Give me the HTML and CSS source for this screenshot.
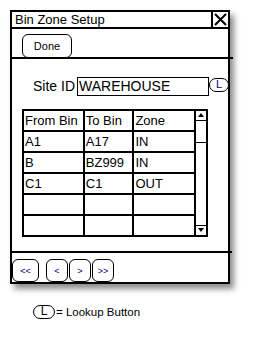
FILE: index.html
```html
<!DOCTYPE html>
<html lang="en">
<head>
    <meta charset="UTF-8">
    <title>Bin Zone Setup</title>
    <link rel="stylesheet" href="styles.css">
</head>
<body>
    <div class="window">
        <div class="titlebar">
            <span class="title">Bin Zone Setup</span>
            <span class="close">
                <svg width="13" height="13" viewBox="0 0 13 13"><path d="M1 1L12 12M12 1L1 12" stroke="#000" stroke-width="2"/></svg>
            </span>
        </div>
        <div class="toolbar">
            <button class="btn done">Done</button>
        </div>
        <div class="content">
            <div class="site-row">
                <label class="site-label">Site ID</label>
                <div class="site-input">WAREHOUSE</div>
                <span class="lookup">L</span>
            </div>
            <div class="grid">
                <table>
                    <tr class="head"><td class="c1">From Bin</td><td class="c2">To Bin</td><td class="c3">Zone</td></tr>
                    <tr><td>A1</td><td>A17</td><td>IN</td></tr>
                    <tr><td>B</td><td>BZ999</td><td>IN</td></tr>
                    <tr><td>C1</td><td>C1</td><td>OUT</td></tr>
                    <tr><td></td><td></td><td></td></tr>
                    <tr><td></td><td></td><td></td></tr>
                </table>
                <div class="scrollbar">
                    <div class="arrow up"></div>
                    <div class="thumb"></div>
                    <div class="track"></div>
                    <div class="arrow down"></div>
                </div>
            </div>
        </div>
        <div class="nav">
            <button class="btn nav-btn first">&lt;&lt;</button>
            <button class="btn nav-btn">&lt;</button>
            <button class="btn nav-btn">&gt;</button>
            <button class="btn nav-btn">&gt;&gt;</button>
        </div>
    </div>
    <div class="legend">
        <span class="lookup">L</span>
        <span class="legend-text">= Lookup Button</span>
    </div>
</body>
</html>
```
FILE: styles.css
```css
body {
    margin: 0;
    padding: 10px;
    background-color: white;
    font-family: "Liberation Sans", Arial, sans-serif;
    color: #000;
}
.window {
    width: 220px;
    height: 274px;
    box-sizing: border-box;
    border: 2px solid #000;
    background-color: white;
    box-shadow: 4px 5px 6px rgba(0,0,0,0.45);
    display: flex;
    flex-direction: column;
}
.titlebar {
    height: 15px;
    border-bottom: 2px solid #000;
    display: flex;
    align-items: center;
}
.title {
    flex: 1;
    font-size: 13px;
    padding-left: 3px;
}
.close {
    width: 15px;
    height: 15px;
    border-left: 2px solid #000;
    display: flex;
    align-items: center;
    justify-content: center;
}
.toolbar {
    height: 30px;
    padding: 5px 0 0 10px;
    box-sizing: border-box;
    border-bottom: 2px solid #000;
    margin-right: -5px;
}
.btn {
    font-family: "Liberation Sans", Arial, sans-serif;
    background: white;
    border: 1.5px solid #000;
    border-radius: 6px;
    padding: 0;
    color: #000;
}
.done {
    width: 50px;
    height: 24px;
    font-size: 11px;
}
.content {
    flex: 1;
    padding: 18px 0 0 10px;
    border-bottom: 2px solid #000;
    margin-right: -4px;
}
.site-row {
    display: flex;
    align-items: flex-start;
    height: 19px;
}
.site-label {
    font-size: 14px;
    width: 44px;
    padding: 1px 0 0 11px;
}
.site-input {
    width: 132px;
    height: 19px;
    box-sizing: border-box;
    border: 1.5px solid #000;
    font-size: 14px;
    padding-left: 1px;
    line-height: 17px;
}
.lookup {
    width: 20px;
    height: 14px;
    box-sizing: border-box;
    border: 1.5px solid #000;
    border-radius: 7px;
    font-size: 11px;
    line-height: 11px;
    text-align: center;
    color: #000080;
    margin-top: 1px;
    background: white;
}
.grid {
    display: flex;
    margin-top: 13px;
    width: 186px;
}
table {
    border-collapse: collapse;
    border: 2px solid #000;
    font-size: 13px;
}
td {
    border: 2px solid #000;
    height: 19px;
    padding: 0 0 0 1px;
    line-height: 19px;
    vertical-align: middle;
}
.head td {
    height: 18px;
}
.c1 { width: 59px; }
.c2 { width: 47px; }
.c3 { width: 60px; }
.scrollbar {
    width: 10px;
    border: 2px solid #000;
    border-left: none;
    display: flex;
    flex-direction: column;
}
.arrow {
    height: 9px;
    position: relative;
}
.up { border-bottom: 1.5px solid #000; }
.down { border-top: 1.5px solid #000; }
.arrow::after {
    content: "";
    position: absolute;
    left: 2px;
    top: 2px;
    border-left: 3px solid transparent;
    border-right: 3px solid transparent;
}
.up::after { border-bottom: 4px solid #000; }
.down::after { border-top: 4px solid #000; }
.thumb {
    height: 21px;
    border-bottom: 1.5px solid #000;
}
.track {
    flex: 1;
}
.nav {
    display: flex;
    gap: 1px;
    padding-top: 6px;
}
.nav-btn {
    width: 22px;
    height: 23px;
    font-size: 9px;
    color: #000080;
}
.first {
    width: 27px;
    margin-right: 6px;
}
.legend {
    display: flex;
    align-items: center;
    margin: 21px 0 0 23px;
}
.legend .lookup {
    width: 22px;
    margin: 0;
    font-size: 12px;
    color: #000;
}
.legend-text {
    font-size: 11.5px;
    margin-left: 1px;
}
```
